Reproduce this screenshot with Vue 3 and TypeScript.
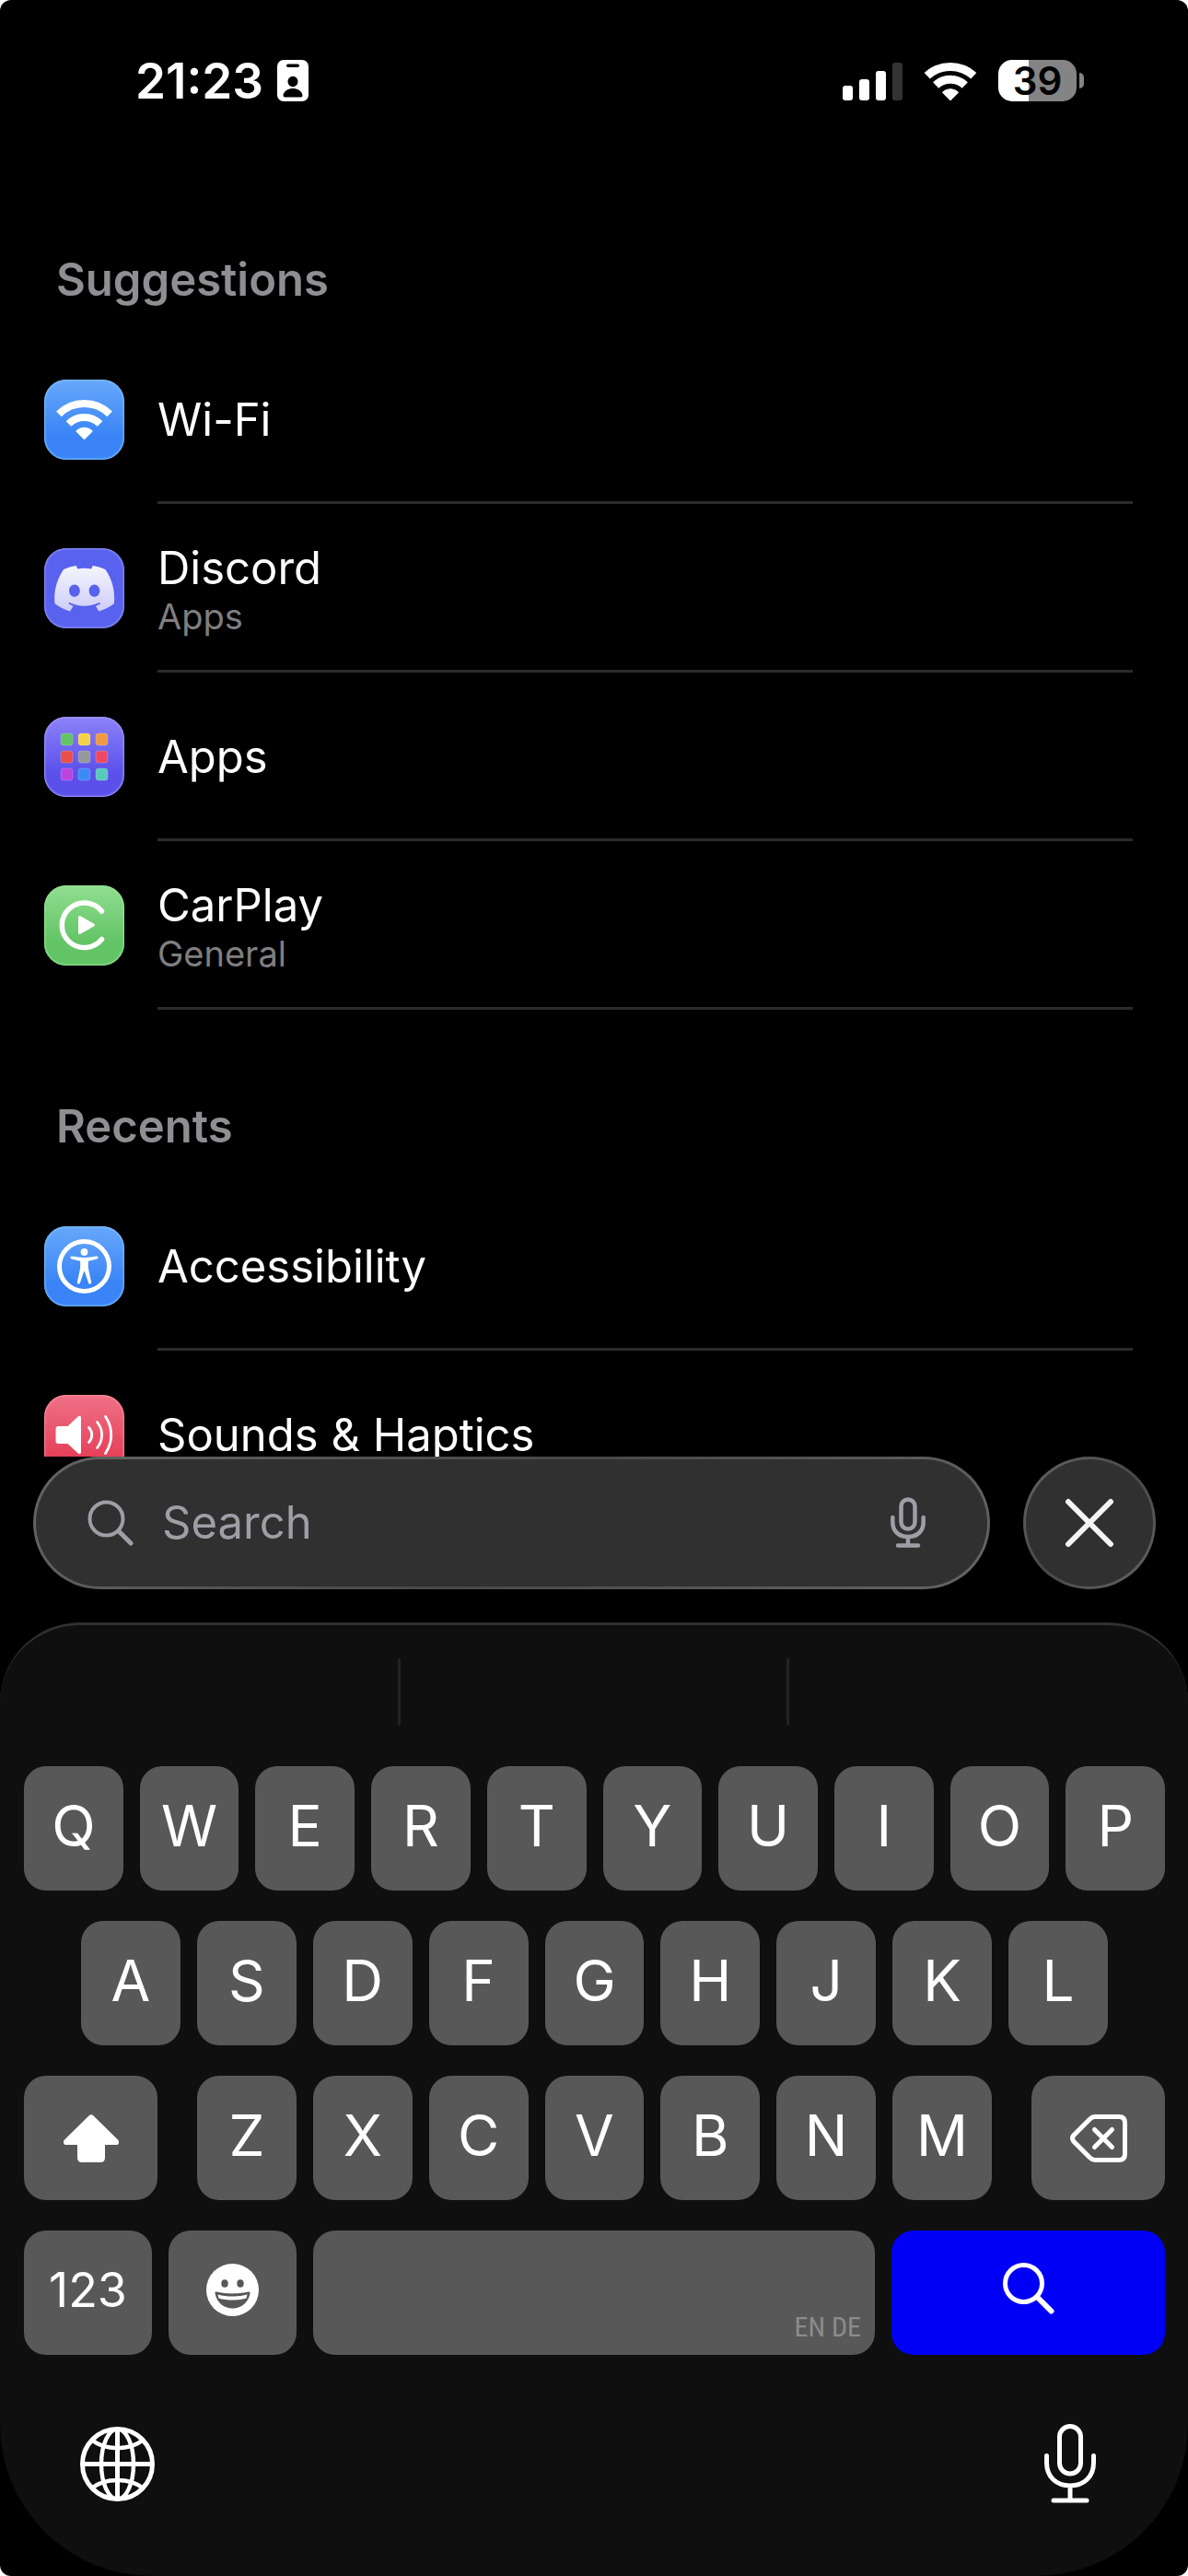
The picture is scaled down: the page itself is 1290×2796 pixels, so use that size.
<script setup lang="ts">
import { ref } from 'vue'

type IconName = 'wifi' | 'discord' | 'apps' | 'carplay' | 'accessibility' | 'sounds'

interface Entry {
  icon: IconName
  title: string
  detail?: string
}

interface Section {
  heading: string
  entries: Entry[]
}

const sections: Section[] = [
  {
    heading: 'Suggestions',
    entries: [
      { icon: 'wifi', title: 'Wi-Fi' },
      { icon: 'discord', title: 'Discord', detail: 'Apps' },
      { icon: 'apps', title: 'Apps' },
      { icon: 'carplay', title: 'CarPlay', detail: 'General' },
    ],
  },
  {
    heading: 'Recents',
    entries: [
      { icon: 'accessibility', title: 'Accessibility' },
      { icon: 'sounds', title: 'Sounds & Haptics' },
    ],
  },
]

const tiles: { x: number; y: number; fill: string }[] = [
  { x: 18, y: 18, fill: '#62c466' },
  { x: 37, y: 18, fill: '#f7d148' },
  { x: 56, y: 18, fill: '#f09a45' },
  { x: 18, y: 37, fill: '#eb4e48' },
  { x: 37, y: 37, fill: '#97979c' },
  { x: 56, y: 37, fill: '#ec4a65' },
  { x: 18, y: 56, fill: '#bd45de' },
  { x: 37, y: 56, fill: '#3b8bf7' },
  { x: 56, y: 56, fill: '#5ac8bc' },
]

const topRow = 'QWERTYUIOP'.split('')
const homeRow = 'ASDFGHJKL'.split('')
const bottomRow = 'ZXCVBNM'.split('')

const query = ref('')
const shifted = ref(true)

function type(letter: string): void {
  query.value += letter
}

function erase(): void {
  query.value = query.value.slice(0, -1)
}

function clear(): void {
  query.value = ''
}
</script>

<template>
  <div class="screen">
    <header class="status">
      <div class="status-side">
        <time class="clock">21:23</time>
        <svg class="glyph" width="34" height="45" viewBox="0 0 34 45" aria-hidden="true">
          <rect width="34" height="45" rx="7" fill="#fff" />
          <rect x="10" y="4.500" width="14" height="3.500" rx="1.700" fill="#000" />
          <ellipse cx="17" cy="23.500" rx="5.500" ry="5.700" fill="#000" />
          <path d="M8.500 40.500C6.500 40.500 6.300 39 6.700 37.500C8 33.500 12 31 17 31S26 33.500 27.300 37.500C27.700 39 27.500 40.500 25.500 40.500Z" fill="#000" />
        </svg>
      </div>
      <div class="status-side status-right">
        <svg class="glyph" width="65" height="42" viewBox="0 0 65 42" aria-hidden="true">
          <rect x="0" y="26" width="11" height="16" rx="3" fill="#fff" />
          <rect x="18" y="19" width="11" height="23" rx="3" fill="#fff" />
          <rect x="36" y="10" width="11" height="32" rx="3" fill="#fff" />
          <rect x="54" y="1" width="11" height="41" rx="3" fill="#333" />
        </svg>
        <svg class="glyph" width="58" height="42" viewBox="0 0 58 42" aria-hidden="true">
          <path d="M3.700 15.300A37.500 37.500 0 0 1 54.300 15.300" fill="none" stroke="#fff" stroke-width="9" />
          <path d="M13.200 25.500A23 23 0 0 1 44.800 25.500" fill="none" stroke="#fff" stroke-width="9" />
          <path d="M29 42L20.300 33.200A12.500 12.500 0 0 1 37.700 33.200Z" fill="#fff" stroke="#fff" stroke-linejoin="round" />
        </svg>
        <div class="battery">
          <span class="battery-cell">39</span>
          <span class="battery-tip"></span>
        </div>
      </div>
    </header>

    <main class="results">
      <section v-for="section in sections" :key="section.heading">
        <h2 class="heading">{{ section.heading }}</h2>
        <ul class="entries">
          <li v-for="entry in section.entries" :key="entry.title">
            <a class="entry" href="#">
              <span class="tile" :class="entry.icon">
                <svg width="87" height="87" viewBox="0 0 87 87" aria-hidden="true">
                  <g v-if="entry.icon === 'wifi'" fill="none" stroke="#fff" stroke-width="8">
                    <path d="M15.900 37.400A39 39 0 0 1 71.100 37.400" />
                    <path d="M26.500 48A24 24 0 0 1 60.500 48" />
                    <path d="M43.500 64L35.500 56A11.500 11.500 0 0 1 51.500 56Z" fill="#fff" stroke-width="2" stroke-linejoin="round" />
                  </g>
                  <template v-else-if="entry.icon === 'discord'">
                    <defs>
                      <linearGradient id="discordFade" x1="0" y1="0" x2="0" y2="1">
                        <stop offset="0" stop-color="#f6f6fe" />
                        <stop offset="1" stop-color="#cdccf9" />
                      </linearGradient>
                    </defs>
                    <path transform="translate(11.200 11.200) scale(2.708)" fill="url(#discordFade)" d="M20.317 4.3698a19.7913 19.7913 0 00-4.8851-1.5152.0741.0741 0 00-.0785.0371c-.211.3753-.4447.8648-.6083 1.2495-1.8447-.2762-3.68-.2762-5.4868 0-.1636-.3933-.4058-.8742-.6177-1.2495a.077.077 0 00-.0785-.037 19.7363 19.7363 0 00-4.8852 1.515.0699.0699 0 00-.0321.0277C.5334 9.0458-.319 13.5799.0992 18.0578a.0824.0824 0 00.0312.0561c2.0528 1.5076 4.0413 2.4228 5.9929 3.0294a.0777.0777 0 00.0842-.0276c.4616-.6304.8731-1.2952 1.226-1.9942a.076.076 0 00-.0416-.1057c-.6528-.2476-1.2743-.5495-1.8722-.8923a.077.077 0 01-.0076-.1277c.1258-.0943.2517-.1923.3718-.2914a.0743.0743 0 01.0776-.0105c3.9278 1.7933 8.18 1.7933 12.0614 0a.0739.0739 0 01.0785.0095c.1202.099.246.1981.3728.2924a.077.077 0 01-.0066.1276 12.2986 12.2986 0 01-1.873.8914.0766.0766 0 00-.0407.1067c.3604.698.7719 1.3628 1.225 1.9932a.076.076 0 00.0842.0286c1.961-.6067 3.9495-1.5219 6.0023-3.0294a.077.077 0 00.0313-.0552c.5004-5.177-.8382-9.6739-3.5485-13.6604a.061.061 0 00-.0312-.0286zM8.02 15.3312c-1.1825 0-2.1569-1.0857-2.1569-2.419 0-1.3332.9555-2.4189 2.157-2.4189 1.2108 0 2.1757 1.0952 2.1568 2.419 0 1.3332-.9555 2.4189-2.1569 2.4189zm7.9748 0c-1.1825 0-2.1569-1.0857-2.1569-2.419 0-1.3332.9554-2.4189 2.1569-2.4189 1.2108 0 2.1757 1.0952 2.1568 2.419 0 1.3332-.946 2.4189-2.1568 2.4189Z" />
                  </template>
                  <g v-else-if="entry.icon === 'apps'" stroke="#fff" stroke-opacity=".2">
                    <rect v-for="tile in tiles" :key="tile.fill" :x="tile.x" :y="tile.y" width="13" height="13" rx="3" :fill="tile.fill" />
                  </g>
                  <g v-else-if="entry.icon === 'carplay'">
                    <path d="M62.500 28A24.300 24.300 0 1 0 62.500 58.500" fill="none" stroke="#fff" stroke-width="5.500" stroke-linecap="round" />
                    <path d="M38.500 34.500V51.500L53.500 43Z" fill="#fff" stroke="#fff" stroke-width="3" stroke-linejoin="round" />
                  </g>
                  <g v-else-if="entry.icon === 'accessibility'" fill="#fff">
                    <circle cx="43.500" cy="43.500" r="27" fill="none" stroke="#fff" stroke-width="5" />
                    <circle cx="43.500" cy="28" r="3.900" />
                    <path d="M30.500 32.600C39 34.400 48 34.400 56.500 32.600C58.700 32.200 59.300 35 57.300 35.600L48 37.800C47.600 42 47.700 45 48.600 49L51.200 60.500C51.600 62.900 48.700 63.600 48 61.300L43.900 49H43.100L39 61.300C38.300 63.600 35.400 62.900 35.800 60.500L38.400 49C39.300 45 39.400 42 39 37.800L29.700 35.600C27.700 35 28.300 32.200 30.500 32.600Z" />
                  </g>
                  <g v-else fill="none" stroke="#fff" stroke-width="2.800" stroke-linecap="round">
                    <path d="M15.500 34H25.500L36.500 23.700C38.500 22 40 23 40 25V62C40 64 38.500 65 36.500 63.300L25.500 53H15.500C13.500 53 12.500 52 12.500 50V37C12.500 35 13.500 34 15.500 34Z" fill="#fff" stroke="none" />
                    <path d="M48.500 35.500C52.800 40 52.800 47 48.500 51.500" />
                    <path d="M57.500 29.500C64.300 38 64.300 49 57.500 57.500" />
                    <path d="M66.500 23.500C74.800 36 74.800 51 66.500 63.500" />
                  </g>
                </svg>
              </span>
              <span class="entry-text">
                <span class="entry-title">{{ entry.title }}</span>
                <span v-if="entry.detail" class="entry-detail">{{ entry.detail }}</span>
              </span>
            </a>
          </li>
        </ul>
      </section>
    </main>

    <form class="search" @submit.prevent>
      <div class="glass field">
        <svg class="glyph" width="50" height="50" viewBox="0 0 50 50" aria-hidden="true" fill="none" stroke="#9e9ea6" stroke-linecap="round">
          <circle cx="20.500" cy="20.500" r="18" stroke-width="4" />
          <path d="M34 34L47 47" stroke-width="5" />
        </svg>
        <input v-model="query" class="query" type="text" placeholder="Search" aria-label="Search" />
        <button class="plain" type="button" aria-label="Dictate">
          <svg width="38" height="56" viewBox="0 0 38 56" aria-hidden="true" fill="none" stroke="#9e9ea6" stroke-width="4.500" stroke-linecap="round">
            <rect x="11.500" y="2.500" width="15" height="32" rx="7.500" />
            <path d="M2.300 22V27C2.300 37 9 43 19 43S35.700 37 35.700 27V22M19 44V52" />
            <path d="M8 52.500H30" />
          </svg>
        </button>
      </div>
      <button class="glass close" type="button" aria-label="Close" @click="clear">
        <svg width="54" height="54" viewBox="0 0 54 54" aria-hidden="true">
          <path d="M4 4L50 50M50 4L4 50" stroke="#f4f4f4" stroke-width="6" stroke-linecap="round" />
        </svg>
      </button>
    </form>

    <div class="keyboard">
      <div class="predictions"><span></span><span></span><span></span></div>
      <div class="rows">
        <div class="row">
          <button v-for="letter in topRow" :key="letter" class="key" type="button" @click="type(letter)">{{ letter }}</button>
        </div>
        <div class="row home">
          <button v-for="letter in homeRow" :key="letter" class="key" type="button" @click="type(letter)">{{ letter }}</button>
        </div>
        <div class="row third">
          <button class="key modifier" type="button" aria-label="Shift" :aria-pressed="shifted" @click="shifted = !shifted">
            <svg width="60" height="52" viewBox="0 0 60 52" aria-hidden="true">
              <path d="M27.500 1.500Q30 -1 32.500 1.500L59 27.500C61 30 60 33 57 33H45V47Q45 52 40 52H20Q15 52 15 47V33H3C0 33 -1 30 1 27.500Z" fill="#fff" />
            </svg>
          </button>
          <div class="row letters">
            <button v-for="letter in bottomRow" :key="letter" class="key" type="button" @click="type(letter)">{{ letter }}</button>
          </div>
          <button class="key modifier" type="button" aria-label="Delete" @click="erase">
            <svg width="62" height="52" viewBox="0 0 62 52" aria-hidden="true" fill="none" stroke="#fff" stroke-width="5" stroke-linecap="round" stroke-linejoin="round">
              <path d="M27 2.500H53Q59.500 2.500 59.500 9V43Q59.500 49.500 53 49.500H27Q24 49.500 21.500 47L4 29.500Q1 26 4 22.500L21.500 5Q24 2.500 27 2.500Z" />
              <path d="M26.500 16.500L45.500 35.500M45.500 16.500L26.500 35.500" />
            </svg>
          </button>
        </div>
        <div class="row">
          <button class="key side numbers" type="button">123</button>
          <button class="key side" type="button" aria-label="Emoji">
            <svg width="57" height="57" viewBox="0 0 57 57" aria-hidden="true">
              <circle cx="28.500" cy="28.500" r="28.500" fill="#fff" />
              <ellipse cx="20" cy="21.500" rx="3.700" ry="4.200" fill="#585858" />
              <ellipse cx="37" cy="21.500" rx="3.700" ry="4.200" fill="#585858" />
              <path d="M11 30.500C22 33 35 33 46 30.500Q47.800 30.200 47.500 32C46 42 38 48.500 28.500 48.500S11 42 9.500 32Q9.200 30.200 11 30.500Z" fill="#585858" />
              <path d="M12.500 33.500C23 36.200 34 36.200 44.500 33.500L43.500 37.500C34 40.200 23 40.200 13.500 37.500Z" fill="#fff" />
            </svg>
          </button>
          <button class="key space" type="button" @click="type(' ')">EN DE</button>
          <button class="key submit" type="button" aria-label="Search">
            <svg width="56" height="56" viewBox="0 0 56 56" aria-hidden="true" fill="none" stroke="#fff" stroke-linecap="round">
              <circle cx="22.500" cy="22.500" r="20" stroke-width="5" />
              <path d="M37.500 37.500L52.500 52.500" stroke-width="6" />
            </svg>
          </button>
        </div>
      </div>
      <div class="dock">
        <button class="plain" type="button" aria-label="Next keyboard">
          <svg width="81" height="81" viewBox="0 0 81 81" aria-hidden="true" fill="none" stroke="#fff" stroke-width="5">
            <circle cx="40.500" cy="40.500" r="38" />
            <ellipse cx="40.500" cy="40.500" rx="17.500" ry="38" stroke-width="4.500" />
            <path d="M40.500 2.500V78.500M2.500 40.500H78.500" />
            <path d="M13 14.500C27 26 54 26 68 14.500M13 66.500C27 55 54 55 68 66.500" stroke-width="4.500" />
          </svg>
        </button>
        <button class="plain" type="button" aria-label="Dictate">
          <svg width="56" height="86" viewBox="0 0 56 86" aria-hidden="true" fill="none" stroke="#fff" stroke-width="5" stroke-linecap="round">
            <rect x="16.500" y="2.500" width="23" height="51.500" rx="11.500" />
            <path d="M2.500 34.500V42C2.500 57.500 13 67 28 67S53.500 57.500 53.500 42V34.500M28 67V82" />
            <path d="M10 83H46" />
          </svg>
        </button>
      </div>
    </div>
  </div>
</template>

<style>
html {
  background: #fff;
}
</style>

<style scoped>
.screen {
  display: flex;
  flex-direction: column;
  height: 100vh;
  overflow: hidden;
  border-radius: 12px;
  background: #000;
  color: #fff;
  font-family: Inter, "Liberation Sans", sans-serif;
}

button {
  margin: 0;
  padding: 0;
  border: 0;
  background: none;
  color: inherit;
  font: inherit;
}

svg {
  display: block;
}

.glyph {
  flex: none;
}

/* Status bar */
.status {
  display: flex;
  flex: none;
  align-items: center;
  justify-content: space-between;
  box-sizing: border-box;
  height: 177px;
  padding: 0 113px 2px 147px;
}

.status-side {
  display: flex;
  align-items: center;
  gap: 15px;
}

.status-right {
  gap: 23px;
}

.clock {
  font-size: 53px;
  font-weight: 600;
  line-height: 60px;
}

.battery {
  display: flex;
  align-items: center;
  gap: 3px;
}

.battery-cell {
  width: 85px;
  border-radius: 15px;
  background: linear-gradient(90deg, #fff 39%, #848484 39%);
  color: #000;
  font-size: 42px;
  font-weight: 600;
  line-height: 45px;
  text-align: center;
}

.battery-tip {
  width: 5px;
  height: 17px;
  border-radius: 0 8px 8px 0;
  background: #848484;
}

/* Results */
.results {
  flex: 1;
  min-height: 0;
  overflow: hidden;
}

.heading {
  margin: 0;
  padding: 97px 61px 30px;
  color: #8e8e93;
  font-size: 49px;
  font-weight: 600;
  line-height: 60px;
}

.entries {
  margin: 0;
  padding: 0;
  list-style: none;
}

.entry {
  display: flex;
  align-items: center;
  gap: 36px;
  height: 183px;
  padding: 0 60px 0 48px;
  color: inherit;
  text-decoration: none;
}

.entry-text {
  display: flex;
  flex: 1;
  flex-direction: column;
  align-self: stretch;
  justify-content: center;
  box-shadow: inset 0 -3px #2b2b2b;
}

.entry-title {
  font-size: 49px;
  line-height: 60px;
}

.entry-detail {
  color: #7f7f7f;
  font-size: 38px;
  line-height: 44px;
}

.tile {
  flex: none;
  overflow: hidden;
  border-radius: 24px;
}

.wifi,
.accessibility {
  background: linear-gradient(#67a8fa, #3a84f7 70%);
  box-shadow: inset 0 0 2px 1px #7fc0fc;
}

.discord {
  background: #5962ee;
  box-shadow: inset 0 0 2px 1px #9195f5;
}

.apps {
  background: linear-gradient(#8c82f8, #5b50ea 70%);
  box-shadow: inset 0 0 2px 1px #a49cfa;
}

.carplay {
  background: linear-gradient(#90de90, #63c466 70%);
  box-shadow: inset 0 0 2px 1px #94e896;
}

.sounds {
  background: linear-gradient(#ef7288, #e63e57 80%);
  box-shadow: inset 0 0 2px 1px #f48d9e;
}

/* Search */
.search {
  display: flex;
  flex: none;
  gap: 36px;
  margin: 0 36px 36px;
}

.glass {
  box-sizing: border-box;
  height: 144px;
  border: 3px solid transparent;
  border-radius: 72px;
  background:
    linear-gradient(#303030, #303030) padding-box,
    linear-gradient(135deg, #646464, #484848 50%, #646464) border-box;
}

.field {
  display: flex;
  flex: 1;
  align-items: center;
  gap: 31px;
  padding: 0 67px 0 56px;
}

.query {
  flex: 1;
  min-width: 0;
  padding: 0;
  border: 0;
  outline: 0;
  background: none;
  color: #fff;
  font: 49px/60px Inter, "Liberation Sans", sans-serif;
}

.query::placeholder {
  color: #9e9ea6;
  opacity: 1;
}

.close {
  display: grid;
  flex: none;
  place-items: center;
  width: 144px;
}

/* Keyboard */
.keyboard {
  flex: none;
  border-top: 3px solid #303030;
  border-radius: 87px 87px 165px 165px;
  background: #0f0f0f;
}

.predictions {
  display: flex;
  padding: 36px 14px 45px 10px;
}

.predictions span {
  flex: 1;
  height: 72px;
}

.predictions span + span {
  box-shadow: inset 3px 0 #232323;
}

.rows {
  display: flex;
  flex-direction: column;
  gap: 33px;
  padding: 0 25px 0 26px;
}

.row {
  display: flex;
  gap: 18px;
}

.home {
  padding: 0 62px;
}

.third {
  gap: 43px;
}

.letters {
  flex: 1;
}

.key {
  display: flex;
  flex: 1 1 0;
  align-items: center;
  justify-content: center;
  box-sizing: border-box;
  min-width: 0;
  height: 135px;
  padding-bottom: 6px;
  border-radius: 24px;
  background: #585858;
  font-size: 62px;
}

.modifier {
  flex: 0 0 145px;
  padding-bottom: 0;
}

.side {
  flex: 0 0 139px;
}

.numbers {
  font-size: 52px;
}

.space {
  align-items: flex-end;
  justify-content: flex-end;
  padding: 0 15px 12px;
  color: #8c8c8c;
  font: 30px/36px "Liberation Sans Narrow", "Roboto Condensed", "Liberation Sans", sans-serif;
}

.submit {
  flex: 0 0 297px;
  padding-bottom: 9px;
  background: #0000f6;
}

.dock {
  display: flex;
  align-items: center;
  justify-content: space-between;
  box-sizing: border-box;
  height: 240px;
  padding: 0 100px 4px 87px;
}
</style>
